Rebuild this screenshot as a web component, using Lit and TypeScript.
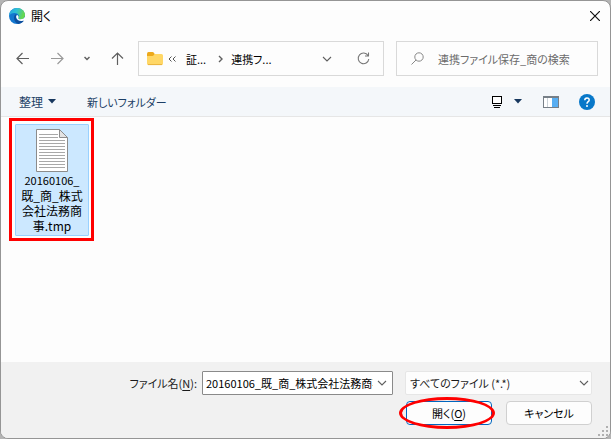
import { LitElement, html, css, svg } from "lit";
import { customElement, state } from "lit/decorators.js";

const arrowLeft = svg`<path d="M1 6.5H13M6.5 1L1 6.5L6.5 12"/>`;

@customElement("app-root")
export class AppRoot extends LitElement {
  @state() private fileName = "20160106_既_商_株式会社法務商事.tmp";

  static styles = css`
    :host {
      display: block;
      background: #b4b4b4;
      font-family: "Noto Sans CJK JP", sans-serif;
      font-feature-settings: "palt";
      font-size: 11px;
      line-height: 16px;
      color: #1a1a1a;
    }
    * { box-sizing: border-box; }
    button, input, select { font: inherit; font-feature-settings: inherit; color: inherit; margin: 0; }
    button { border: 0; padding: 0; background: none; display: flex; align-items: center; justify-content: center; }
    svg { display: block; flex: none; fill: none; }
    .dialog {
      min-height: 100vh;
      display: flex;
      flex-direction: column;
      background: #fdfdfd;
      border: 1px solid #959595;
      border-radius: 8px;
      overflow: hidden;
    }
    .title { display: flex; align-items: center; gap: 6px; height: 29px; padding: 0 7px 0 8px; flex: none; }
    .title h1 { flex: 1; margin: 0; font-size: 12px; font-weight: 400; color: #000; }
    .close { width: 16px; height: 16px; }
    .nav { display: flex; align-items: center; padding: 11px 12px 11px 9px; flex: none; }
    .arrows { display: flex; gap: 11px; margin-right: 9px; }
    .arrows button { width: 24px; height: 24px; }
    .arrows .recent { width: 14px; }
    .address, .search { height: 35px; border: 1px solid #d9d9d9; display: flex; align-items: center; background: #fdfdfd; }
    .address { flex: 1; min-width: 0; padding: 0 12px 0 8px; }
    .crumb { color: #000; }
    .guillemet { margin: 0 10px 0 5px; }
    .sep { margin: 0 8px 0 12px; }
    .grow { flex: 1; }
    .down { width: 16px; height: 24px; margin-right: 20px; }
    .refresh { width: 16px; height: 24px; }
    .search { width: 202px; margin-left: 12px; padding: 0 12px 0 14px; gap: 14px; }
    .search input { flex: 1; min-width: 0; border: 0; padding: 0; background: none; outline: 0; }
    .search input::placeholder { color: #6b6b6b; opacity: 1; }
    .tools {
      display: flex; align-items: center; height: 30px; padding: 0 15px 0 18px; flex: none;
      background: #f4f7fa; border-bottom: 1px solid #e6e6e6; color: #1c3f66;
    }
    .tools button { height: 24px; }
    .tools .organize { gap: 5px; margin-right: 31px; font-size: 12px; }
    .views { gap: 12px; margin-right: 21px; }
    .pane { margin-right: 20px; }
    .files { flex: 1; padding: 1px 8px; }
    .mark { width: 85px; padding: 3px 2px 2px 3px; border: 3px solid #f00; }
    .file {
      width: 100%; flex-direction: column; justify-content: flex-start; height: 112px; padding: 4px 0 0;
      background: #cce8ff; border: 1px solid #99d1ff; border-radius: 1px; color: #000; font-size: 12px;
    }
    .name { width: 62px; line-height: 15px; overflow-wrap: anywhere; text-align: center; }
    .latin { font-size: 11px; }
    .footer { flex: none; background: #f1f1f1; padding: 9px 18px 13px; }
    .fields { display: flex; align-items: center; gap: 12px; }
    .field { flex: 1; min-width: 0; display: flex; align-items: center; }
    .field label { width: 183px; flex: none; padding-right: 5px; text-align: right; }
    .combo { flex: 1; min-width: 0; height: 24px; display: flex; align-items: center; background: #fff; border: 1px solid #8a8a8a; border-radius: 1px; padding: 0 4px 0 3px; }
    .combo input { flex: 1; min-width: 0; height: 20px; padding: 0; border: 0; background: none; outline: 0; color: #000; }
    .combo button { width: 12px; height: 20px; margin-left: 3px; }
    .filter { position: relative; width: 187px; flex: none; }
    .filter select { appearance: none; display: block; width: 100%; height: 24px; padding: 0 20px 0 4px; border: 1px solid #e6e6e6; border-radius: 2px; background: #fdfdfd; }
    .filter svg { position: absolute; right: 3px; top: 8px; pointer-events: none; }
    .actions { display: flex; justify-content: flex-end; gap: 14px; margin-top: 6px; }
    .actions button { width: 86px; height: 24px; border: 1px solid #d0d0d0; border-radius: 4px; background: #fdfdfd; color: #000; }
    .target { position: relative; }
    .target button { border-color: #0067c0; }
    .ring { position: absolute; left: -7px; top: -4px; width: 96px; height: 32px; border: 3px solid #f00; border-radius: 50%; pointer-events: none; }
    .grip { position: absolute; right: 2px; bottom: 2px; }
    .wrap { position: relative; }
    u { text-underline-offset: 2px; }
  `;

  private chevron() {
    return html`<svg width="10" height="8" viewBox="0 0 10 8" stroke="#606060" stroke-width="1.1"><path d="M1 2L5 6L9 2"/></svg>`;
  }

  private caret() {
    return html`<svg width="8" height="5" viewBox="0 0 8 5"><path d="M0 0H8L4 4.6Z" fill="#17375e"/></svg>`;
  }

  render() {
    return html`
      <div class="wrap">
        <main class="dialog">
          <header class="title">
            <svg width="16" height="16" viewBox="0 0 16 16">
              <defs>
                <linearGradient id="sea" x1="0" y1="0" x2="1" y2="0.3">
                  <stop offset="0" stop-color="#249fe0"/><stop offset="0.5" stop-color="#2fc0d4"/><stop offset="1" stop-color="#66d84c"/>
                </linearGradient>
              </defs>
              <circle cx="8" cy="8" r="8" fill="#1377cf"/>
              <path d="M0 7.8C.3 3.3 3.7 0 8 0C12.5 0 16 3.2 16 7C16 9.5 14.2 11.2 11.8 11.2C10 11.2 9.1 10.5 9.4 9.9C10.8 7.8 9.2 5.1 5.8 4.9C3 4.8 1 6 0 7.8Z" fill="url(#sea)"/>
              <path d="M5.9 6.8C3.7 10.5 6 15 9.2 15.9C11.9 15.6 14 14.2 15.1 12.2C11.5 14 7.4 12.6 7.1 9.4C7 8.3 7.4 7.5 8 7C7.3 6.5 6.6 6.5 5.9 6.8Z" fill="#0d4f9e"/>
              <path d="M9.4 9.9C8.9 10.6 10 11.3 11.8 11.2C13.5 11.2 14.8 10.5 16 9L16 12.2C12 14 7.7 12.6 7.2 9.3C7.1 8.2 7.5 7.4 8.1 7C9.2 7.4 10 8.7 9.4 9.9Z" fill="#fff"/>
            </svg>
            <h1>開く</h1>
            <button class="close" aria-label="閉じる">
              <svg width="10" height="10" viewBox="0 0 10 10" stroke="#111" stroke-width="1.2"><path d="M0 0L10 10M10 0L0 10"/></svg>
            </button>
          </header>

          <nav class="nav">
            <div class="arrows">
              <button aria-label="戻る"><svg width="13" height="13" viewBox="0 0 13 13" stroke="#5f5f5f" stroke-width="1.2">${arrowLeft}</svg></button>
              <button aria-label="進む"><svg width="13" height="13" viewBox="0 0 13 13" stroke="#999" stroke-width="1.2"><path d="M0 6.5H12M6.5 1L12 6.5L6.5 12"/></svg></button>
              <button class="recent" aria-label="最近の場所"><svg width="6" height="5" viewBox="0 0 6 5" stroke="#606060" stroke-width="1.5"><path d="M.5 1L3 3.5L5.5 1"/></svg></button>
              <button aria-label="上へ"><svg width="13" height="13" viewBox="0 0 13 13" stroke="#5f5f5f" stroke-width="1.2"><path d="M6.5 13V1M1 6.5L6.5 1L12 6.5"/></svg></button>
            </div>
            <div class="address">
              <svg width="16" height="14" viewBox="0 0 16 14">
                <path d="M0 2Q0 0 1.5 0H5.5Q6.5 0 7 1L8 2.5V5H0Z" fill="#eda91b"/>
                <path d="M0 4H5.5Q6.5 4 7.5 2H14.5Q16 2 16 3.5V11.5Q16 13 14.5 13H1.5Q0 13 0 11.5Z" fill="#ffd766"/>
                <path d="M1 12.6H15" stroke="#e9b33d"/>
              </svg>
              <svg class="guillemet" width="8" height="6" viewBox="0 0 8 6" stroke="#555"><path d="M3.5 .5L1 3L3.5 5.5M7.5 .5L5 3L7.5 5.5"/></svg>
              <button class="crumb">証...</button>
              <svg class="sep" width="5" height="8" viewBox="0 0 5 8" stroke="#606060" stroke-width="1.4"><path d="M1 1L4 4L1 7"/></svg>
              <button class="crumb">連携フ...</button>
              <span class="grow"></span>
              <button class="down" aria-label="以前の場所">${this.chevron()}</button>
              <button class="refresh" aria-label="最新の情報に更新">
                <svg width="13" height="13" viewBox="0 0 13 13" stroke="#777" stroke-width="1.1"><path d="M11 3.5A5.3 5.3 0 1 0 11.8 7M11.5 .5V4H8"/></svg>
              </button>
            </div>
            <div class="search">
              <svg width="13" height="13" viewBox="0 0 13 13" stroke="#888"><circle cx="8" cy="5" r="4.2"/><path d="M5 8L.5 12.5"/></svg>
              <input type="text" aria-label="検索" placeholder="連携ファイル保存_商の検索" />
            </div>
          </nav>

          <div class="tools">
            <button class="organize">整理${this.caret()}</button>
            <button>新しいフォルダー</button>
            <span class="grow"></span>
            <button class="views" aria-label="表示方法">
              <svg width="10" height="12" viewBox="0 0 10 12" stroke="#000"><rect x=".5" y=".5" width="9" height="7" fill="#fff"/><path d="M1 9.5H9M2 11.5H8"/></svg>
              ${this.caret()}
            </button>
            <button class="pane" aria-label="プレビュー ウィンドウ">
              <svg width="16" height="12" viewBox="0 0 16 12"><rect x=".5" y=".5" width="15" height="11" fill="#fff" stroke="#777f87"/><path d="M0 1H16" stroke="#777f87" stroke-width="2"/><path d="M4.5 2V11" stroke="#ccd3d9"/><rect x="9" y="2" width="6" height="9" fill="#58aef2"/></svg>
            </button>
            <button aria-label="ヘルプ">
              <svg width="16" height="16" viewBox="0 0 16 16"><circle cx="8" cy="8" r="8" fill="#0878c9"/><path d="M5.8 6.2C5.8 3.2 10.2 3.2 10.2 5.9C10.2 7.6 8 7.7 8 9.7" stroke="#fff" stroke-width="1.5"/><circle cx="8" cy="12" r="1" fill="#fff"/></svg>
            </button>
          </div>

          <section class="files">
            <div class="mark">
              <button class="file">
                <svg width="32" height="43" viewBox="0 0 32 43">
                  <path d="M.5 .5H23.5L31.5 8.5V42.5H.5Z" fill="#fff" stroke="#8c8c8c"/>
                  <path d="M23.5 .5V8.5H31.5Z" fill="#e3e3e3" stroke="#8c8c8c"/>
                  <path d="M3 5.5H22M3 8.5H22M3 11.5H29M3 14.5H29M3 17.5H29M3 20.5H29M3 23.5H29M3 26.5H29M3 29.5H29M3 32.5H29M3 35.5H29M3 38.5H29" stroke="#a8a8a8"/>
                </svg>
                <span class="name"><span class="latin">20160106_</span>既_商_株式会社法務商事.tmp</span>
              </button>
            </div>
          </section>

          <footer class="footer">
            <div class="fields">
              <div class="field">
                <label for="file-name">ファイル名(<u>N</u>):</label>
                <div class="combo">
                  <input id="file-name" type="text" .value=${this.fileName} />
                  <button aria-label="履歴">${this.chevron()}</button>
                </div>
              </div>
              <div class="filter">
                <select aria-label="ファイルの種類"><option>すべてのファイル (*.*)</option></select>
                ${this.chevron()}
              </div>
            </div>
            <div class="actions">
              <div class="target">
                <button>開く(<u>O</u>)</button>
                <span class="ring"></span>
              </div>
              <button>キャンセル</button>
            </div>
          </footer>
        </main>
        <svg class="grip" width="11" height="11" viewBox="0 0 11 11">
          <path fill="#b0b0b0" d="M8 0H10V2H8ZM4 4H6V6H4ZM8 4H10V6H8ZM0 8H2V10H0ZM4 8H6V10H4ZM8 8H10V10H8Z"/>
        </svg>
      </div>
    `;
  }
}
